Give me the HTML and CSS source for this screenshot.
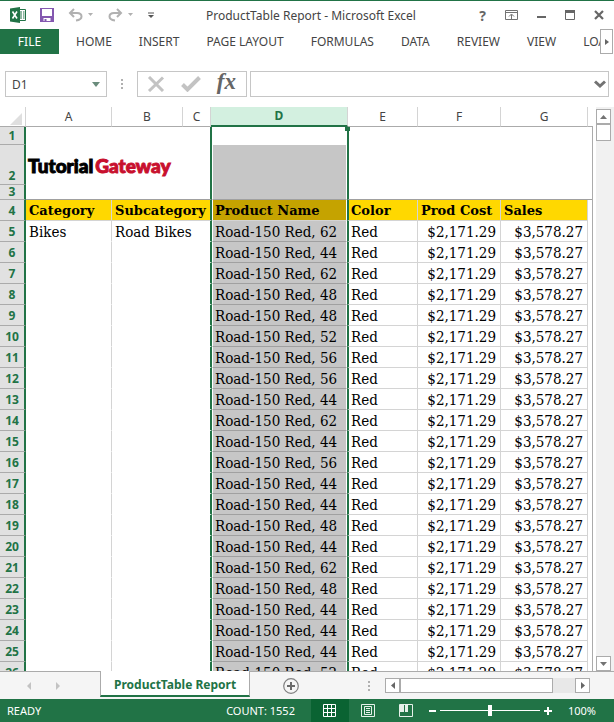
FILE: index.html
```
<!DOCTYPE html>
<html lang="en">
<head>
	<meta charset="UTF-8">
	<meta name="viewport" content="width=device-width, initial-scale=1.0">
	<title>ProductTable Report - Microsoft Excel</title>
	<link rel="stylesheet" href="styles.css">
</head>
<body>
	<header class="titlebar">
		<div class="quick-access">
			<svg class="logo" width="16" height="16" viewBox="0 0 16 16">
				<path d="M9 2.5h6.500v11H9" fill="#fff" stroke="#217346"/>
				<path d="M10 5h2M13 5h1.500M10 7h2M13 7h1.500M10 9h2M13 9h1.500M10 11h2M13 11h1.500" stroke="#217346"/>
				<path d="M0 1.500L10 0v16L0 14.500z" fill="#217346"/>
				<path d="M2.500 4.500l4.500 7M7 4.500l-4.500 7" stroke="#fff" stroke-width="1.600"/>
			</svg>
			<button class="icon" aria-label="Save">
				<svg width="14" height="14" viewBox="0 0 14 14"><path d="M0 0h14v14H0z" fill="#8458b0"/><path d="M2 1h10v7H2zM3.500 10h7v3h-4v-2h-2v2h-1z" fill="#fff"/></svg>
			</button>
			<button class="icon" aria-label="Undo">
				<svg width="26" height="14" viewBox="0 0 26 14"><path d="M6 1L2 5l4 4M2 5h7c3 0 4.500 1.500 4.500 3.500S12 12 8 12.500" fill="none" stroke="#b1b1b1" stroke-width="2"/><path d="M20 5h5l-2.500 3z" fill="#b1b1b1"/></svg>
			</button>
			<button class="icon" aria-label="Redo">
				<svg width="26" height="14" viewBox="0 0 26 14"><path d="M9 1l4 4-4 4M13 5H6C3 5 1.500 6.500 1.500 8.500S3 12 7 12.500" fill="none" stroke="#b1b1b1" stroke-width="2"/><path d="M20 5h5l-2.500 3z" fill="#b1b1b1"/></svg>
			</button>
			<button class="icon" aria-label="Customize Quick Access Toolbar">
				<svg width="6" height="7" viewBox="0 0 6 7"><path d="M0 1h6" stroke="#555"/><path d="M0 3h6L3 6z" fill="#555"/></svg>
			</button>
		</div>
		<h1>ProductTable Report - Microsoft Excel</h1>
		<div class="window-buttons">
			<button class="icon help" aria-label="Help">?</button>
			<button class="icon" aria-label="Ribbon Display Options">
				<svg width="13" height="10" viewBox="0 0 13 10"><path d="M.5.5h12v9H.5zM1 2.500h11M6.500 9V4.500M4 6.500l2.500-2.500L9 6.500" fill="none" stroke="#737373"/></svg>
			</button>
			<button class="icon" aria-label="Minimize">
				<svg width="9" height="10" viewBox="0 0 9 10"><path d="M0 7h9" stroke="#666" stroke-width="2"/></svg>
			</button>
			<button class="icon" aria-label="Restore">
				<svg width="10" height="10" viewBox="0 0 10 10"><path d="M.5.5h9v9h-9z" fill="none" stroke="#666"/><path d="M0 1.500h10" stroke="#666" stroke-width="3"/></svg>
			</button>
			<button class="icon" aria-label="Close">
				<svg width="10" height="10" viewBox="0 0 10 10"><path d="M1 1l8 8M9 1L1 9" stroke="#666" stroke-width="2.200"/></svg>
			</button>
		</div>
	</header>

	<nav class="ribbon">
		<button class="file">FILE</button>
		<div class="tabs">
			<button>HOME</button>
			<button>INSERT</button>
			<button>PAGE LAYOUT</button>
			<button>FORMULAS</button>
			<button>DATA</button>
			<button>REVIEW</button>
			<button>VIEW</button>
			<button>LOAD</button>
		</div>
		<button class="more" aria-label="More tabs"><svg width="4" height="6" viewBox="0 0 4 6"><path d="M0 0l4 3-4 3z" fill="#666"/></svg></button>
	</nav>

	<div class="formula-bar">
		<div class="name-box">
			<input type="text" value="D1" aria-label="Name Box">
			<button class="icon" aria-label="Names"><svg width="8" height="5" viewBox="0 0 8 5"><path d="M0 0h8L4 5z" fill="#6a8c7c"/></svg></button>
		</div>
		<svg class="grip" width="2" height="10" viewBox="0 0 2 10"><path d="M0 0h2v2H0zM0 4h2v2H0zM0 8h2v2H0z" fill="#b0b0b0"/></svg>
		<div class="entry">
			<button class="icon" aria-label="Cancel"><svg width="18" height="16" viewBox="0 0 18 16"><path d="M2 1l14 14M16 1.500L2 15" stroke="#c3c3c3" stroke-width="3"/></svg></button>
			<button class="icon" aria-label="Enter"><svg width="20" height="16" viewBox="0 0 20 16"><path d="M1.500 8.500l5 5L18.500 1.500" fill="none" stroke="#c3c3c3" stroke-width="4"/></svg></button>
			<button class="icon fx" aria-label="Insert Function">fx</button>
		</div>
		<div class="formula">
			<input type="text" aria-label="Formula">
			<button class="icon" aria-label="Expand Formula Bar"><svg width="12" height="9" viewBox="0 0 12 9"><path d="M1 1.500l5 4.500 5-4.500" fill="none" stroke="#737373" stroke-width="3"/></svg></button>
		</div>
	</div>

	<main class="workspace">
		<div class="sheet">
			<table class="columns">
				<colgroup><col class="w-row"><col class="w-a"><col class="w-b"><col class="w-c"><col class="w-d"><col class="w-e"><col class="w-f"><col class="w-g"><col></colgroup>
				<tr><th class="corner"><svg width="12" height="12" viewBox="0 0 12 12"><path d="M12 0v12H0z" fill="#dfdfdf"/></svg></th><th>A</th><th>B</th><th>C</th><th class="active">D</th><th>E</th><th>F</th><th>G</th><th class="rest"></th></tr>
			</table>
			<table class="cells">
				<colgroup><col class="w-row"><col class="w-a"><col class="w-bc"><col class="w-sel"><col class="w-next"><col class="w-f"><col class="w-g"><col></colgroup>
				<tbody class="frozen">
					<tr class="row1"><th>1</th><td colspan="2" rowspan="3" class="banner"><span class="brand">Tutorial<b>Gateway</b></span></td><td class="first"></td><td class="next"></td><td colspan="3"></td></tr>
					<tr class="row2"><th>2</th><td class="sel"></td><td class="next"></td><td colspan="3"></td></tr>
					<tr class="row3"><th>3</th><td class="sel"></td><td class="next"></td><td colspan="3"></td></tr>
				</tbody>
				<tbody class="data">
					<tr class="head"><th>4</th><td>Category</td><td>Subcategory</td><td>Product Name</td><td>Color</td><td>Prod Cost</td><td>Sales</td><td></td></tr>
					<tr><th>5</th><td>Bikes</td><td>Road Bikes</td><td>Road-150 Red, 62</td><td>Red</td><td>$2,171.29</td><td>$3,578.27</td><td></td></tr>
					<tr><th>6</th><td></td><td></td><td>Road-150 Red, 44</td><td>Red</td><td>$2,171.29</td><td>$3,578.27</td><td></td></tr>
					<tr><th>7</th><td></td><td></td><td>Road-150 Red, 62</td><td>Red</td><td>$2,171.29</td><td>$3,578.27</td><td></td></tr>
					<tr><th>8</th><td></td><td></td><td>Road-150 Red, 48</td><td>Red</td><td>$2,171.29</td><td>$3,578.27</td><td></td></tr>
					<tr><th>9</th><td></td><td></td><td>Road-150 Red, 48</td><td>Red</td><td>$2,171.29</td><td>$3,578.27</td><td></td></tr>
					<tr><th>10</th><td></td><td></td><td>Road-150 Red, 52</td><td>Red</td><td>$2,171.29</td><td>$3,578.27</td><td></td></tr>
					<tr><th>11</th><td></td><td></td><td>Road-150 Red, 56</td><td>Red</td><td>$2,171.29</td><td>$3,578.27</td><td></td></tr>
					<tr><th>12</th><td></td><td></td><td>Road-150 Red, 56</td><td>Red</td><td>$2,171.29</td><td>$3,578.27</td><td></td></tr>
					<tr><th>13</th><td></td><td></td><td>Road-150 Red, 44</td><td>Red</td><td>$2,171.29</td><td>$3,578.27</td><td></td></tr>
					<tr><th>14</th><td></td><td></td><td>Road-150 Red, 62</td><td>Red</td><td>$2,171.29</td><td>$3,578.27</td><td></td></tr>
					<tr><th>15</th><td></td><td></td><td>Road-150 Red, 44</td><td>Red</td><td>$2,171.29</td><td>$3,578.27</td><td></td></tr>
					<tr><th>16</th><td></td><td></td><td>Road-150 Red, 56</td><td>Red</td><td>$2,171.29</td><td>$3,578.27</td><td></td></tr>
					<tr><th>17</th><td></td><td></td><td>Road-150 Red, 44</td><td>Red</td><td>$2,171.29</td><td>$3,578.27</td><td></td></tr>
					<tr><th>18</th><td></td><td></td><td>Road-150 Red, 44</td><td>Red</td><td>$2,171.29</td><td>$3,578.27</td><td></td></tr>
					<tr><th>19</th><td></td><td></td><td>Road-150 Red, 48</td><td>Red</td><td>$2,171.29</td><td>$3,578.27</td><td></td></tr>
					<tr><th>20</th><td></td><td></td><td>Road-150 Red, 44</td><td>Red</td><td>$2,171.29</td><td>$3,578.27</td><td></td></tr>
					<tr><th>21</th><td></td><td></td><td>Road-150 Red, 62</td><td>Red</td><td>$2,171.29</td><td>$3,578.27</td><td></td></tr>
					<tr><th>22</th><td></td><td></td><td>Road-150 Red, 48</td><td>Red</td><td>$2,171.29</td><td>$3,578.27</td><td></td></tr>
					<tr><th>23</th><td></td><td></td><td>Road-150 Red, 44</td><td>Red</td><td>$2,171.29</td><td>$3,578.27</td><td></td></tr>
					<tr><th>24</th><td></td><td></td><td>Road-150 Red, 44</td><td>Red</td><td>$2,171.29</td><td>$3,578.27</td><td></td></tr>
					<tr><th>25</th><td></td><td></td><td>Road-150 Red, 44</td><td>Red</td><td>$2,171.29</td><td>$3,578.27</td><td></td></tr>
					<tr><th>26</th><td></td><td></td><td>Road-150 Red, 52</td><td>Red</td><td>$2,171.29</td><td>$3,578.27</td><td></td></tr>
				</tbody>
			</table>
		</div>
		<div class="vscroll">
			<button aria-label="Scroll up"><svg width="7" height="4" viewBox="0 0 7 4"><path d="M0 4h7L3.500 0z" fill="#737373"/></svg></button>
			<div class="vthumb"></div>
			<button class="down" aria-label="Scroll down"><svg width="7" height="4" viewBox="0 0 7 4"><path d="M0 0h7L3.500 4z" fill="#737373"/></svg></button>
		</div>
	</main>

	<div class="sheet-bar">
		<div class="sheet-nav">
			<button class="icon" aria-label="Previous sheet"><svg width="4" height="8" viewBox="0 0 4 8"><path d="M4 0v8L0 4z" fill="#c3c3c3"/></svg></button>
			<button class="icon" aria-label="Next sheet"><svg width="4" height="8" viewBox="0 0 4 8"><path d="M0 0v8l4-4z" fill="#c3c3c3"/></svg></button>
		</div>
		<button class="sheet-tab">ProductTable Report</button>
		<button class="icon add" aria-label="New sheet"><svg width="16" height="16" viewBox="0 0 16 16"><circle cx="8" cy="8" r="7.300" fill="none" stroke="#808080" stroke-width="1.200"/><path d="M8 4v8M4 8h8" stroke="#6a6a6a" stroke-width="2"/></svg></button>
		<svg class="grip" width="2" height="10" viewBox="0 0 2 10"><path d="M0 0h2v2H0zM0 4h2v2H0zM0 8h2v2H0z" fill="#b0b0b0"/></svg>
		<div class="hscroll">
			<button aria-label="Scroll left"><svg width="4" height="7" viewBox="0 0 4 7"><path d="M4 0v7L0 3.500z" fill="#666"/></svg></button>
			<div class="hthumb"></div>
			<button class="right" aria-label="Scroll right"><svg width="4" height="7" viewBox="0 0 4 7"><path d="M0 0v7l4-3.500z" fill="#666"/></svg></button>
		</div>
	</div>

	<footer class="status">
		<span class="ready">READY</span>
		<span class="count">COUNT: 1552</span>
		<div class="views">
			<button class="view current" aria-label="Normal"><svg width="13" height="13" viewBox="0 0 13 13"><path d="M.5.5h12v12H.5zM4.500 0v13M8.500 0v13M0 4.500h13M0 8.500h13" fill="none" stroke="#fff"/></svg></button>
			<button class="view" aria-label="Page Layout"><svg width="14" height="13" viewBox="0 0 14 13"><path d="M.5.5h13v12H.5zM3.500 2.500h7v8h-7zM5 4.500h4M5 6.500h4M5 8.500h4" fill="none" stroke="#e6f1ea"/></svg></button>
			<button class="view" aria-label="Page Break Preview"><svg width="14" height="13" viewBox="0 0 14 13"><path d="M.5.5h13v12H.5z" fill="none" stroke="#e6f1ea"/><path d="M1 1h4v7H1zM6 1h3v7H6z" fill="#e6f1ea"/></svg></button>
		</div>
		<div class="zoom">
			<button class="icon" aria-label="Zoom out"><svg width="7" height="8" viewBox="0 0 7 8"><path d="M0 4h7" stroke="#fff" stroke-width="2"/></svg></button>
			<input type="range" min="0" max="200" value="100" aria-label="Zoom">
			<button class="icon" aria-label="Zoom in"><svg width="8" height="8" viewBox="0 0 8 8"><path d="M0 4h8M4 0v8" stroke="#fff" stroke-width="2"/></svg></button>
		</div>
		<span class="percent">100%</span>
	</footer>
</body>
</html>
```
FILE: styles.css
```
*, *:before, *:after {
	box-sizing: border-box;
}

body {
	margin: 0;
	height: 100vh;
	display: flex;
	flex-direction: column;
	overflow: hidden;
	background: #fff;
	border-top: 1px solid #217346;
	color: #444;
	font: 12px "Noto Sans", "Open Sans", sans-serif;
}

button,
input {
	font: inherit;
	color: inherit;
	margin: 0;
	padding: 0;
	border: 0;
	border-radius: 0;
	background: none;
	outline: none;
}

svg {
	display: block;
	flex: none;
}

.icon {
	display: flex;
	align-items: center;
	justify-content: center;
	flex: none;
}

/* title bar */
.titlebar {
	display: flex;
	align-items: center;
	height: 28px;
	padding: 0 10px;
	flex: none;
}

.quick-access,
.window-buttons {
	display: flex;
	align-items: center;
	gap: 14px;
}

.titlebar h1 {
	flex: 1;
	margin: 0;
	padding-left: 52px;
	font-size: 12px;
	font-weight: normal;
	white-space: nowrap;
}

.window-buttons {
	gap: 19px;
}

.help {
	font-size: 14px;
	font-weight: bold;
	color: #666;
}

/* ribbon */
.ribbon {
	display: flex;
	height: 25px;
	flex: none;
}

.file {
	width: 59px;
	background: #217346;
	color: #fff;
}

.tabs {
	display: flex;
	flex: 1;
	min-width: 0;
	overflow: hidden;
	gap: 27px;
	padding-left: 17px;
	white-space: nowrap;
}

.tabs button {
	flex: none;
}

.more {
	display: flex;
	align-items: center;
	justify-content: center;
	width: 13px;
	margin-right: 1px;
	border: 1px solid #ababab;
}

/* formula bar */
.formula-bar {
	display: flex;
	align-items: center;
	height: 26px;
	margin: 17px 5px 10px;
	flex: none;
}

.name-box,
.entry,
.formula {
	display: flex;
	align-items: center;
	height: 26px;
	border: 1px solid #c6c6c6;
}

.name-box {
	width: 102px;
	padding: 0 6px;
}

.name-box input,
.formula input {
	flex: 1;
	min-width: 0;
	width: 100%;
}

.formula-bar .grip {
	margin: 0 14px;
}

.entry {
	width: 110px;
	justify-content: space-between;
	padding: 0 10px 0 9px;
}

.fx {
	padding-bottom: 4px;
	font: italic bold 23px/20px "Liberation Serif", serif;
	color: #666;
}

.formula {
	flex: 1;
	margin-left: 3px;
	padding: 0 2px;
}

/* sheet */
.workspace {
	display: flex;
	flex: 1;
	min-height: 0;
}

.sheet {
	flex: 1;
	min-width: 0;
	overflow: hidden;
}

table {
	width: 100%;
	table-layout: fixed;
	border-collapse: separate;
	border-spacing: 0;
}

th,
td {
	padding: 0;
	white-space: nowrap;
}

.w-row { width: 26px; }
.w-a { width: 86px; }
.w-b { width: 71px; }
.w-c { width: 28px; }
.w-d { width: 137px; }
.w-e { width: 70px; }
.w-f { width: 83px; }
.w-g { width: 87px; }
.w-bc { width: 100px; }
.w-sel { width: 135px; }
.w-next { width: 71px; }

.columns th {
	height: 20px;
	font-size: 12px;
	line-height: 18px;
	font-weight: normal;
	border-right: 1px solid #d4d4d4;
	border-bottom: 1px solid #ababab;
}

.columns .corner {
	padding: 4px 3px 0 10px;
}

.columns .active {
	background: #d3f0e0;
	color: #217346;
	font-weight: bold;
	border-bottom: 2px solid #217346;
}

.columns .rest {
	border-right: 0;
}

.cells {
	border-right: 1px solid #ababab;
	color: #000;
	font: 15px/18px "DejaVu Serif Condensed", "DejaVu Serif", serif;
}

.cells th {
	background: #e1e1e1;
	color: #217346;
	font: bold 12px/18px "Noto Sans", sans-serif;
	vertical-align: bottom;
	border-right: 2px solid #217346;
	border-bottom: 1px solid #ababab;
}

.cells .row1 th { height: 18px; line-height: 17px; }
.cells .row2 th { height: 40px; line-height: 17px; }
.cells .row3 th { height: 15px; line-height: 14px; }

.row3 td,
.banner {
	border-bottom: 1px solid #a0a0a0;
}

.banner {
	padding-top: 6px;
	border-right: 2px solid #217346;
}

.brand {
	margin-left: 2px;
	font: 900 19px/24px Lato, sans-serif;
	-webkit-text-stroke: 1px;
}

.brand b {
	margin-left: 2px;
	color: #c8102e;
	font-weight: 900;
}

.sel,
.data td:nth-child(4) {
	background: #c6c6c6;
	background-clip: padding-box;
	border-left: 1px solid #fff;
	border-right: 1px solid #fff;
}

.next,
.data td:nth-child(5) {
	border-left: 2px solid #217346;
}

/* fill handle of the selected column */
.row1 .first {
	background: linear-gradient(#217346, #217346) 100% 0 / 2px 4px no-repeat;
}

.row1 .next {
	background: linear-gradient(#217346, #217346) 0 0 / 1px 4px no-repeat;
}

.data th,
.data td {
	height: 21px;
}

.data td {
	padding: 2px 0 0 3px;
	border-right: 1px solid #d4d4d4;
	border-bottom: 1px solid #d4d4d4;
}

.data td:nth-child(2),
.data td:nth-child(3) {
	border-bottom-color: #fff;
}

.data td:nth-child(3) {
	border-right: 2px solid #217346;
}

.data td:nth-child(4) {
	padding-left: 2px;
	border-right-color: #fff;
	border-bottom-color: #a0a0a0;
}

.data td:nth-child(5) {
	padding-left: 2px;
}

.data td:nth-child(6),
.data td:nth-child(7) {
	padding: 2px 4px 0 0;
	text-align: right;
}

.data td:nth-child(8) {
	border: 0;
}

.data .head td {
	background-color: #ffd800;
	font-family: "DejaVu Serif", serif;
	font-size: 13px;
	font-weight: bold;
	border-bottom-color: #d4d4d4;
}

.data .head td:nth-child(4) {
	background-color: #c5a300;
}

.data .head td:nth-child(6),
.data .head td:nth-child(7) {
	padding: 2px 0 0 3px;
	text-align: left;
}

.data .head td:nth-child(8) {
	background: none;
}

/* scroll bars */
.vscroll {
	display: flex;
	flex-direction: column;
	width: 21px;
	padding: 2px 3px 0;
	background: linear-gradient(90deg, #fff 3px, #f1f1f1 3px);
}

.vscroll button,
.hscroll button {
	display: flex;
	align-items: center;
	justify-content: center;
	width: 15px;
	height: 15px;
	border: 1px solid #ababab;
	background: #fff;
	flex: none;
}

.vthumb {
	height: 17px;
	border: 1px solid #ababab;
	background: #fff;
}

.vscroll .down {
	margin-top: auto;
}

/* sheet tabs */
.sheet-bar {
	display: flex;
	height: 28px;
	flex: none;
	align-items: center;
	padding-right: 24px;
	background: #f5f5f5;
	border-top: 1px solid #ababab;
}

.sheet-nav {
	display: flex;
	width: 100px;
	gap: 25px;
	padding-left: 27px;
}

.sheet-tab {
	align-self: flex-start;
	height: 26px;
	margin-top: -1px;
	padding: 2px 13px 0;
	background: #fff;
	color: #217346;
	font-weight: bold;
	border: 1px solid #ababab;
	border-top: 0;
	border-bottom: 2px solid #217346;
	white-space: nowrap;
}

.add {
	margin-left: 33px;
}

.sheet-bar .grip {
	margin-left: auto;
}

.hscroll {
	display: flex;
	width: 205px;
	margin-left: 15px;
	background: #e8e8e8;
}

.hthumb {
	width: 153px;
	border: 1px solid #ababab;
	background: #fff;
}

.hscroll .right {
	margin-left: auto;
}

/* status bar */
.status {
	display: flex;
	align-items: center;
	height: 23px;
	flex: none;
	padding: 0 18px 0 7px;
	background: #217346;
	color: #fff;
	font-size: 11px;
	white-space: nowrap;
}

.count {
	margin-left: auto;
}

.views {
	display: flex;
	align-self: stretch;
	margin-left: 16px;
}

.view {
	display: flex;
	align-items: center;
	justify-content: center;
	width: 38px;
}

.current {
	background: #0a6332;
}

.zoom {
	display: flex;
	align-items: center;
	gap: 4px;
	margin-left: 4px;
}

.zoom input {
	-webkit-appearance: none;
	width: 100px;
	height: 12px;
	background: linear-gradient(#fff, #fff) center / 100% 1px no-repeat;
}

.zoom input::-webkit-slider-thumb {
	-webkit-appearance: none;
	width: 4px;
	height: 11px;
	background: #fff;
}

.percent {
	margin-left: 16px;
}
```
